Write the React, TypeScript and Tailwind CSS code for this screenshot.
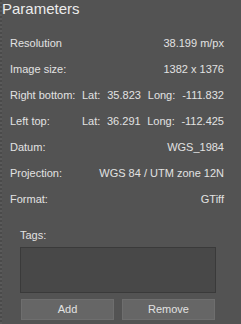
import React from "react";

const font = { fontFamily: '"Liberation Sans", Arial, sans-serif' };

function Row({ label, value }: { label: string; value: string }) {
  return (
    <div className="flex h-[26px] items-center justify-between leading-[26px]">
      <span>{label}</span>
      <span>{value}</span>
    </div>
  );
}

function CoordRow({ label, lat, long }: { label: string; lat: string; long: string }) {
  return (
    <div className="flex h-[26px] items-center leading-[26px]">
      <span className="w-[72px] shrink-0 whitespace-nowrap">{label}</span>
      <div className="flex flex-1 justify-between">
        <span>Lat:</span>
        <span>{lat}</span>
        <span>Long:</span>
        <span>{long}</span>
      </div>
    </div>
  );
}

export default function App() {
  return (
    <div
      className="flex h-[324px] w-[241px] overflow-hidden bg-[#535353] text-[#e2e2e2]"
      style={font}
    >
      <div className="w-[2px] shrink-0 bg-[repeating-linear-gradient(180deg,#4a4a4a_0px,#4a4a4a_2px,#5a5a5a_2px,#5a5a5a_4px)]" />
      <div className="flex flex-1 flex-col">
        <div className="h-[18px] text-[15px] leading-[18px] text-[#ececec]">Parameters</div>
        <div className="mt-[11.5px] pl-[8px] pr-[17px] text-[11px]">
          <Row label="Resolution" value="38.199 m/px" />
          <Row label="Image size:" value="1382 x 1376" />
          <CoordRow label="Right bottom:" lat="35.823" long="-111.832" />
          <CoordRow label="Left top:" lat="36.291" long="-112.425" />
          <Row label="Datum:" value="WGS_1984" />
          <Row label="Projection:" value="WGS 84 / UTM zone 12N" />
          <Row label="Format:" value="GTiff" />
        </div>
        <div className="mt-[15.5px] pl-[18px] pr-[25px] text-[11px]">
          <div className="h-[16px] leading-[16px]">Tags:</div>
          <div className="mt-[4px] h-[46px] border border-[#3a3a3a] bg-[#484848]" />
          <div className="mt-[6px] flex gap-[8px] px-[1px]">
            <button className="h-[21px] flex-1 border border-[#6e6e6e] bg-[#666666] text-[11px] leading-[19px] text-[#e2e2e2]">
              Add
            </button>
            <button className="h-[21px] flex-1 border border-[#6e6e6e] bg-[#666666] text-[11px] leading-[19px] text-[#e2e2e2]">
              Remove
            </button>
          </div>
        </div>
      </div>
    </div>
  );
}
